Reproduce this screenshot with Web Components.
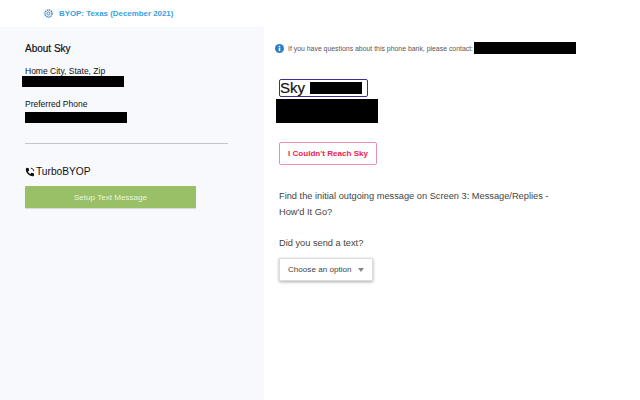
<!DOCTYPE html>
<html>
<head>
<meta charset="utf-8">
<style>
  html, body { margin: 0; padding: 0; height: 100%; background: #fff; overflow: hidden; }
  body { font-family: "Liberation Sans", Arial, sans-serif; }
</style>
</head>
<body>
<template id="top-bar-tpl">
  <style>
    :host { display: flex; align-items: center; gap: 6px; height: 27px; padding-left: 44px; box-sizing: border-box; background: #fff; color: #3a9fe0; font-size: 7.9px; font-weight: bold; padding-bottom: 1px; }
    svg { width: 9px; height: 9px; flex: none; }
  </style>
  <svg viewBox="0 0 24 24" fill="none" stroke="#2f7fc0"><circle cx="12" cy="12" r="9.5" stroke-width="3.4" stroke-dasharray="4 1.6"/><circle cx="12" cy="12" r="4" stroke-width="2.4"/></svg>
  <span><slot></slot></span>
</template>

<template id="side-panel-tpl">
  <style>
    :host { display: block; width: 264px; flex: none; box-sizing: border-box; background: #f8f9fd; padding: 15px 36px 0 25px; }
  </style>
  <slot></slot>
</template>

<template id="info-field-tpl">
  <style>
    :host { display: block; color: #111; font-size: 8.5px; font-weight: 500; line-height: 10px; }
    .bar { display: block; width: 102px; height: 11px; background: #000; margin-top: var(--bar-gap, 0); margin-left: var(--bar-left, 0); }
  </style>
  <slot></slot>
  <span class="bar"></span>
</template>

<template id="green-button-tpl">
  <style>
    :host { display: flex; align-items: center; justify-content: center; width: 171px; height: 22px; background: #99bf67; color: #e9f5d9; font-size: 8.1px; border-radius: 1px; box-shadow: 0 1px 1px #0002; }
  </style>
  <slot></slot>
</template>

<template id="outline-button-tpl">
  <style>
    :host { display: inline-flex; align-items: center; justify-content: center; width: 98px; height: 23px; box-sizing: border-box; border: 1px solid #ee8fa8; border-radius: 2px; color: #e8234f; font-size: 8.1px; font-weight: bold; background: #fff; }
  </style>
  <slot></slot>
</template>

<template id="option-select-tpl">
  <style>
    :host { display: inline-flex; align-items: center; gap: 7px; width: 94px; height: 23px; box-sizing: border-box; padding-left: 8px; background: #fff; color: #444; font-size: 8.1px; border: 1px solid #ddd; box-shadow: 0 1px 3px #0005; }
    i { width: 0; height: 0; border-left: 3.5px solid transparent; border-right: 3.5px solid transparent; border-top: 4px solid #888; }
  </style>
  <slot></slot><i></i>
</template>

<template id="main-panel-tpl">
  <style>
    :host { display: block; flex: 1; box-sizing: border-box; padding: 15px 0 0 12px; background: #fff; }
  </style>
  <slot></slot>
</template>

<top-bar>BYOP: Texas (December 2021)</top-bar>
<div style="display:flex;height:373px">
  <side-panel>
    <div style="font-size:10px;font-weight:500;color:#111;line-height:12px;margin:1px 0 11px;-webkit-text-stroke:.2px #111">About Sky</div>
    <info-field style="--bar-left:-3px">Home City, State, Zip</info-field>
    <div style="height:12px"></div>
    <info-field style="--bar-gap:3px">Preferred Phone</info-field>
    <div style="height:1px;background:#c6c6ca;margin:20px 0 0 0"></div>
    <div style="display:flex;align-items:center;gap:1px;margin-top:21px;font-size:10.2px;color:#111;line-height:14px">
      <svg width="10" height="10" viewBox="0 0 24 24" style="flex:none"><path fill="#111" d="M4 2l5 1 1 6-3 2c1 3 3 5 6 6l2-3 6 1 1 5-2 2C10 23 1 13 2 4z"/><path fill="none" stroke="#111" stroke-width="2.2" d="M14 3c4 0 7 3 7 7"/></svg>
      <span>TurboBYOP</span>
    </div>
    <green-button style="margin-top:7px">Setup Text Message</green-button>
  </side-panel>
  <main-panel>
    <div style="display:flex;align-items:center;height:12px;font-size:6.9px;color:#555;margin-left:-1px">
      <svg width="9" height="9" viewBox="0 0 24 24" style="margin-right:4px;flex:none"><circle cx="12" cy="12" r="12" fill="#2b7fc4"/><rect x="10" y="10" width="4" height="9" fill="#fff"/><rect x="10" y="5" width="4" height="3.5" fill="#fff"/></svg>
      <span>If you have questions about this phone bank, please contact:</span>
      <span style="display:inline-block;width:102px;height:12px;background:#000;margin-left:1px"></span>
    </div>
    <div style="margin:25px 0 0 3px;width:89px;height:18px;box-sizing:border-box;border:1px solid #3a2f96;border-radius:2px;display:flex;align-items:center;font-size:15px;color:#111;line-height:16px;-webkit-text-stroke:.2px #111">
      <span>Sky</span><span style="display:inline-block;width:52px;height:12px;background:#000;margin-left:5px"></span>
    </div>
    <div style="width:102px;height:24px;background:#000;margin-top:2px"></div>
    <outline-button style="margin:19px 0 0 3px;display:flex">I Couldn't Reach Sky</outline-button>
    <div style="margin:23px 0 0 3px;width:285px;font-size:9.25px;line-height:16px;color:#444">Find the initial outgoing message on Screen 3: Message/Replies - How'd It Go?</div>
    <div style="margin:15px 0 0 3px;font-size:9.25px;line-height:16px;color:#444">Did you send a text?</div>
    <option-select style="margin:7px 0 0 3px;display:flex">Choose an option</option-select>
  </main-panel>
</div>
<script>
  function reg(name, tplId) {
    customElements.define(name, class extends HTMLElement {
      constructor() {
        super();
        this.attachShadow({ mode: 'open' }).appendChild(document.getElementById(tplId).content.cloneNode(true));
      }
    });
  }
  reg('top-bar', 'top-bar-tpl');
  reg('side-panel', 'side-panel-tpl');
  reg('info-field', 'info-field-tpl');
  reg('green-button', 'green-button-tpl');
  reg('outline-button', 'outline-button-tpl');
  reg('option-select', 'option-select-tpl');
  reg('main-panel', 'main-panel-tpl');
</script>
</body>
</html>
